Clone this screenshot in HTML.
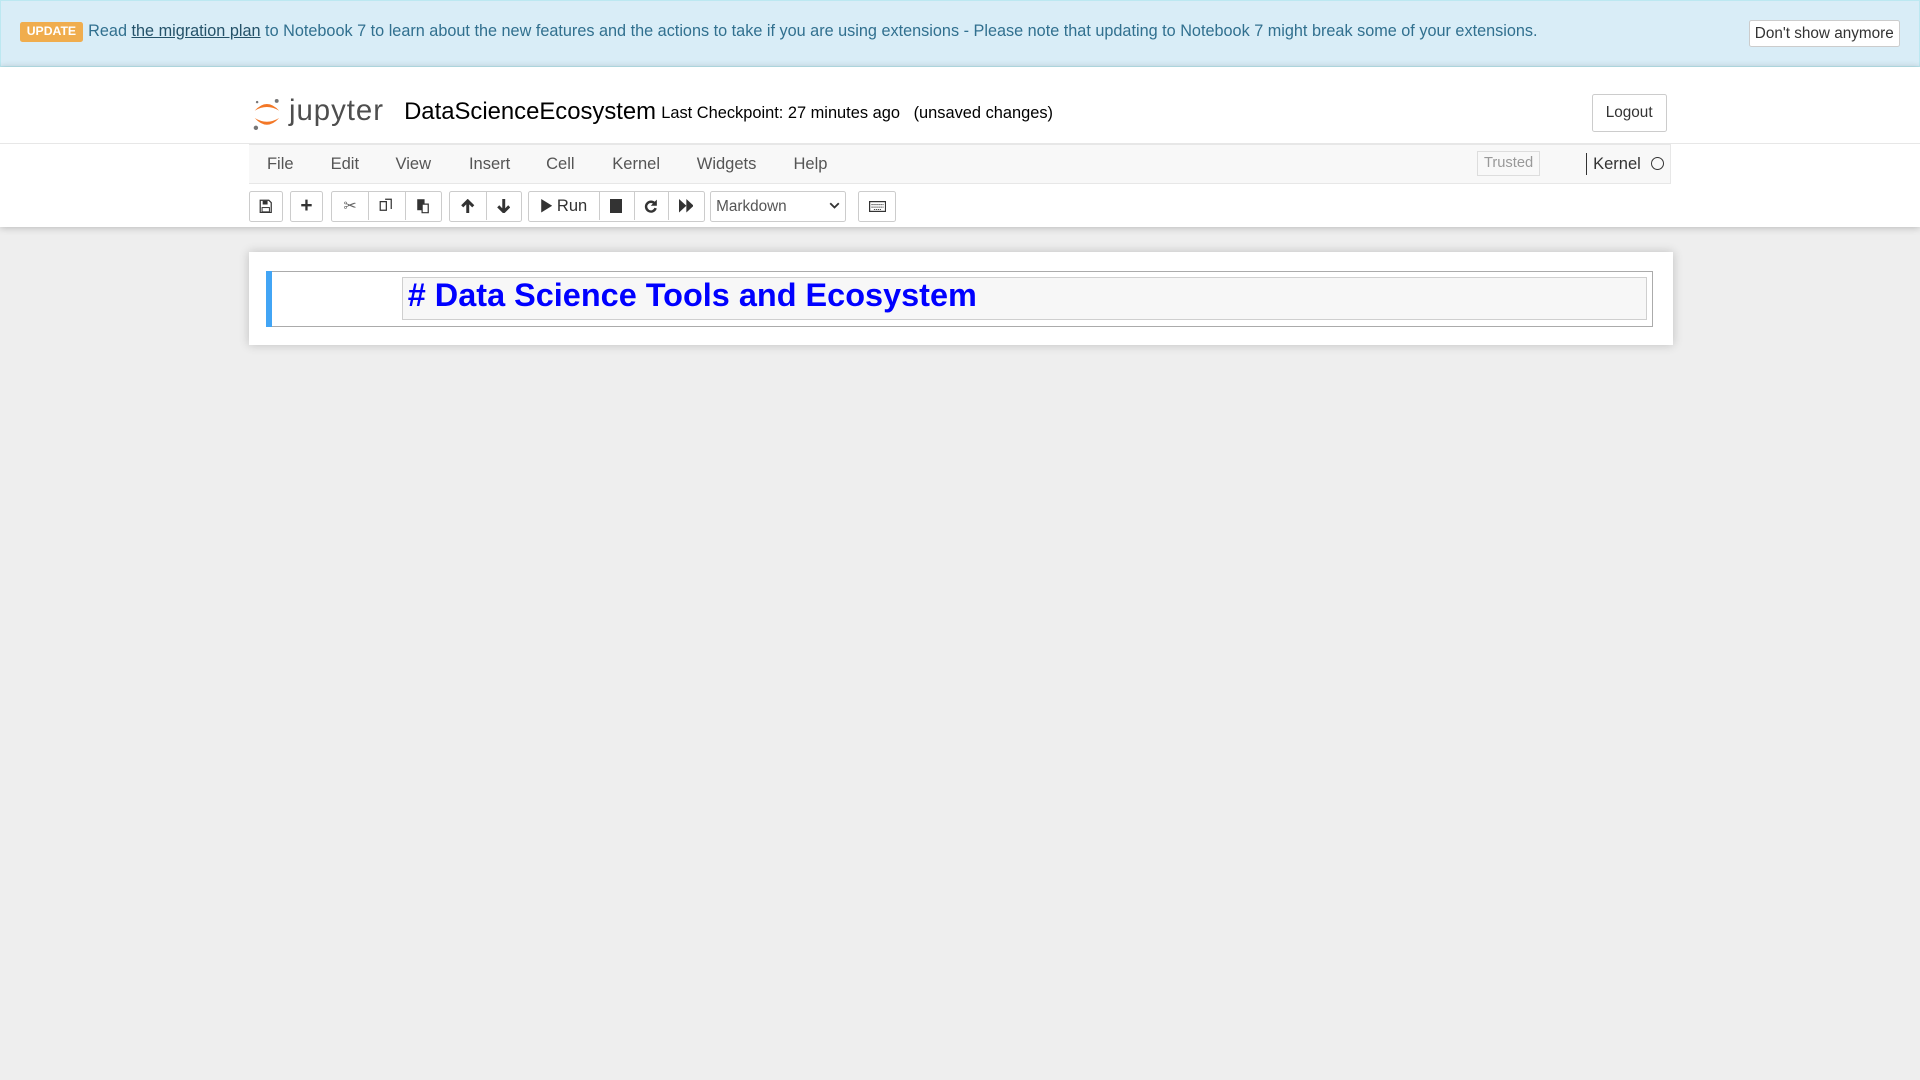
<!DOCTYPE html>
<html><head><meta charset="utf-8"><style>
html,body{margin:0;padding:0;width:1920px;height:1080px;overflow:hidden;background:#eee;font-family:"Liberation Sans",Arial,sans-serif;}
#w{zoom:1.2245;position:relative;width:1568px;height:882px;background:#eee;}
.a{position:absolute;}
#banner{left:0;top:0;width:1566px;height:53px;background:#d9edf7;border:1px solid #bce8f1;}
#badge{left:16px;top:18px;width:52px;height:16px;background:#f0ad4e;color:#fff;font-size:10px;font-weight:bold;line-height:16px;text-align:center;border-radius:2px;}
#btxt{left:72px;top:18px;font-size:13.27px;color:#31708f;white-space:nowrap;}
#btxt u{color:#245269;}
#dis{left:1428px;top:16px;width:122px;height:21px;background:#fff;border:1px solid #ccc;font-size:12.5px;line-height:21px;text-align:center;color:#333;border-radius:2px;}
#hdr{left:0;top:55px;width:1568px;height:130px;background:#fff;box-shadow:0 1px 6px rgba(0,0,0,.25);}
.btn{position:absolute;background:#fff;border:1px solid #ccc;border-radius:2px;box-sizing:border-box;}
#menu{left:203px;top:118px;width:1162px;height:32px;background:#f8f8f8;border:1px solid #e7e7e7;box-sizing:border-box;border-left:none;}
.mi{position:absolute;top:126px;font-size:13.5px;color:#555;}
.tb{position:absolute;top:156px;height:25px;background:#fff;border:1px solid #ccc;border-radius:2px;box-sizing:border-box;}
.tb span{position:absolute;top:0;height:23px;border-left:1px solid #ccc;}
.ic{position:absolute;top:0;height:23px;display:flex;align-items:center;justify-content:center;color:#333;font-size:13px;}
#nb{left:203px;top:206px;width:1163px;height:76px;background:#fff;box-shadow:0 0 8px rgba(0,0,0,.2);}
</style></head><body><div id="w">
<div id="banner" class="a"></div>
<div id="badge" class="a">UPDATE</div>
<div id="btxt" class="a">Read <u>the migration plan</u> to Notebook 7 to learn about the new features and the actions to take if you are using extensions - Please note that updating to Notebook 7 might break some of your extensions.</div>
<div id="dis" class="a">Don't show anymore</div>
<div id="hdr" class="a"></div>
<svg class="a" style="left:205px;top:78px" width="26" height="30" viewBox="0 0 26 30">
<path d="M3 12 Q13 1 23 12 Q13 6 3 12Z" fill="#f37726"/>
<path d="M3 18 Q13 29 23 18 Q13 24 3 18Z" fill="#f37726"/>
<circle cx="21" cy="4" r="1.6" fill="#767677"/><circle cx="4" cy="26" r="1.8" fill="#767677"/><circle cx="5" cy="5" r="1" fill="#767677"/>
</svg>
<div class="a" style="left:236px;top:77px;font-size:24px;color:#4e4e4e;letter-spacing:.8px">jupyter</div>
<div class="a" style="left:330px;top:80px;font-size:19.5px;color:#000">DataScienceEcosystem</div>
<div class="a" style="left:540px;top:85px;font-size:13.4px;color:#000;white-space:nowrap">Last Checkpoint: 27 minutes ago&nbsp;&nbsp;&nbsp;(unsaved changes)</div>
<div class="btn" style="left:1300px;top:77px;width:61px;height:31px;font-size:12.5px;line-height:29px;text-align:center;color:#333">Logout</div>
<div class="a" style="left:0;top:117px;width:1568px;border-top:1px solid #e7e7e7"></div>
<div id="menu" class="a"></div>
<div class="mi" style="left:218px">File</div><div class="mi" style="left:270px">Edit</div><div class="mi" style="left:323px">View</div><div class="mi" style="left:383px">Insert</div><div class="mi" style="left:446px">Cell</div><div class="mi" style="left:500px">Kernel</div><div class="mi" style="left:569px">Widgets</div><div class="mi" style="left:648px">Help</div>
<div class="a" style="left:1206px;top:123px;width:52px;height:21px;border:1px solid #ddd;box-sizing:border-box;background:#f8f8f8;color:#999;font-size:12px;line-height:19px;text-align:center">Trusted</div>
<div class="a" style="left:1295px;top:125px;height:18px;border-left:1px solid #333"></div>
<div class="a" style="left:1301px;top:126px;font-size:13.5px;color:#333">Kernel</div>
<div class="a" style="left:1348px;top:128px;width:9px;height:9px;border:1.6px solid #333;border-radius:50%"></div>
<div class="tb" style="left:203px;width:28px"><div class="ic" style="left:0;width:26px"><svg width="11" height="12" viewBox="0 0 11 12"><path d="M1 1h7l2 2v8H1z" fill="none" stroke="#333"/><rect x="3" y="1.5" width="4" height="3" fill="#333"/><rect x="2.5" y="7" width="6" height="3.5" fill="none" stroke="#333" stroke-width=".8"/></svg></div></div>
<div class="tb" style="left:237px;width:27px"><div class="ic" style="left:0;width:25px;font-size:17px;font-weight:bold">+</div></div>
<div class="tb" style="left:270px;width:91px"><span style="left:30px"></span><span style="left:60px"></span>
<div class="ic" style="left:0;width:30px;color:#666">✂</div>
<div class="ic" style="left:30px;width:30px"><svg width="12" height="13" viewBox="0 0 12 13"><path d="M1 3h5v7H1zM5 1h5v8" fill="none" stroke="#333"/></svg></div>
<div class="ic" style="left:60px;width:30px"><svg width="12" height="13" viewBox="0 0 12 13"><path d="M1 1h6v9H1z" fill="#333"/><path d="M5 5h5v7H5z" fill="#fff" stroke="#333"/></svg></div></div>
<div class="tb" style="left:367px;width:59px"><span style="left:29px"></span>
<div class="ic" style="left:0;width:29px"><svg width="11" height="12" viewBox="0 0 11 12"><path d="M5.5 12V3M1 6l4.5-4.5L10 6" fill="none" stroke="#333" stroke-width="2.4"/></svg></div>
<div class="ic" style="left:29px;width:29px"><svg width="11" height="12" viewBox="0 0 11 12"><path d="M5.5 0v9M1 6l4.5 4.5L10 6" fill="none" stroke="#333" stroke-width="2.4"/></svg></div></div>
<div class="tb" style="left:431px;width:145px"><span style="left:57px"></span><span style="left:86px"></span><span style="left:114px"></span>
<div class="ic" style="left:0;width:57px;font-size:13.5px"><svg width="10" height="11" viewBox="0 0 10 11"><path d="M1 0l9 5.5L1 11z" fill="#333"/></svg>&nbsp;Run</div>
<div class="ic" style="left:57px;width:29px"><div style="width:10px;height:11px;background:#333"></div></div>
<div class="ic" style="left:86px;width:28px"><svg width="11" height="12" viewBox="0 0 11 12"><path d="M9 4A4 4 0 1 0 9.5 7.5" fill="none" stroke="#333" stroke-width="2"/><path d="M10.5 0.5v5h-5z" fill="#333"/></svg></div>
<div class="ic" style="left:114px;width:29px"><svg width="12" height="11" viewBox="0 0 12 11"><path d="M0 0l6 5.5L0 11zM6 0l6 5.5L6 11z" fill="#333"/></svg></div></div>
<div class="tb" style="left:580px;width:111px;height:25px"><div class="a" style="left:4px;top:5px;font-size:12.5px;color:#555">Markdown</div><svg class="a" style="left:96px;top:8px" width="9" height="6" viewBox="0 0 9 6"><path d="M1 1l3.5 3.5L8 1" fill="none" stroke="#333" stroke-width="1.5"/></svg></div>
<div class="tb" style="left:701px;width:31px"><div class="ic" style="left:0;width:29px"><svg width="14" height="9" viewBox="0 0 14 9"><rect x=".5" y=".5" width="13" height="8" fill="none" stroke="#333"/><path d="M2 3h10M2 5h10M4 7h6" stroke="#333" stroke-width=".8" stroke-dasharray="1 .6"/></svg></div></div>
<div id="nb" class="a"></div>
<div class="a" style="left:217px;top:221px;width:1133px;height:46px;border:1px solid #ababab;border-left:none;box-sizing:border-box"></div>
<div class="a" style="left:217px;top:221px;width:5px;height:46px;background:#42a5f5"></div>
<div class="a" style="left:328px;top:226px;width:1017px;height:35px;background:#f7f7f7;border:1px solid #cfcfcf;box-sizing:border-box"></div>
<div class="a" style="left:333px;top:226px;font-size:26.5px;font-weight:bold;color:#0000ff;white-space:nowrap">#&nbsp;Data Science Tools and Ecosystem</div>
</div></body></html>
